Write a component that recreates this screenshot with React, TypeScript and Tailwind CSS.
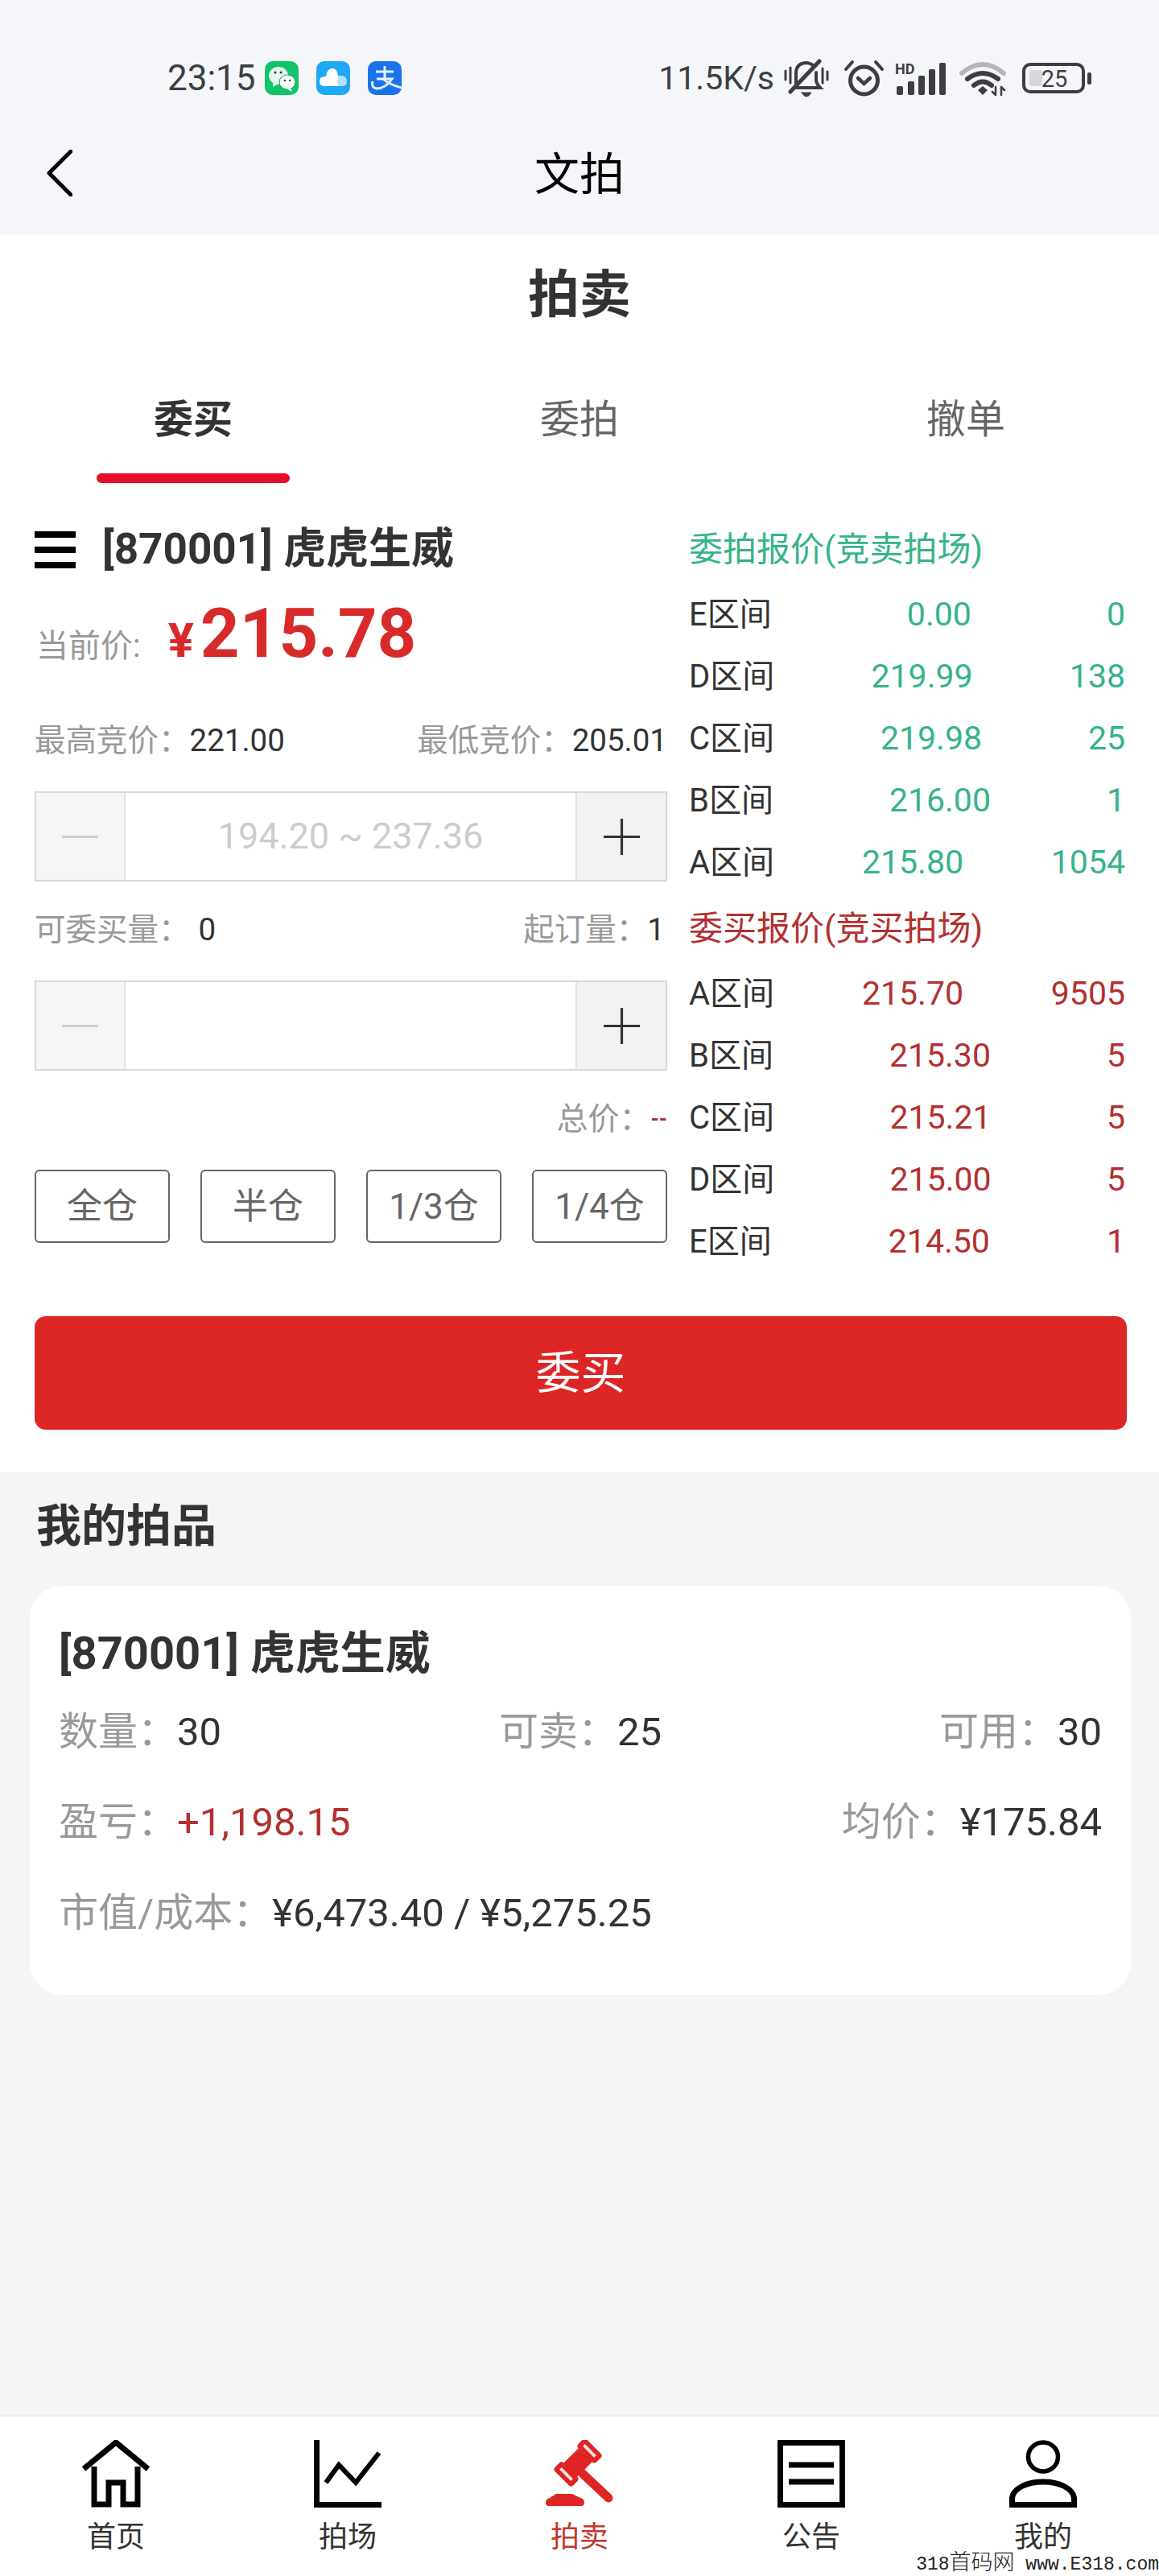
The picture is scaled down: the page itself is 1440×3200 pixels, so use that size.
import { Minus, Plus } from "lucide-react";

const sellRows = [
  { zone: "E区间", price: "0.00", qty: "0" },
  { zone: "D区间", price: "219.99", qty: "138" },
  { zone: "C区间", price: "219.98", qty: "25" },
  { zone: "B区间", price: "216.00", qty: "1" },
  { zone: "A区间", price: "215.80", qty: "1054" },
];

const buyRows = [
  { zone: "A区间", price: "215.70", qty: "9505" },
  { zone: "B区间", price: "215.30", qty: "5" },
  { zone: "C区间", price: "215.21", qty: "5" },
  { zone: "D区间", price: "215.00", qty: "5" },
  { zone: "E区间", price: "214.50", qty: "1" },
];

function StatusIcons() {
  return (
    <div className="flex items-center">
      <span className="text-[41px] leading-[48px] text-[#3d3e42]">11.5K/s</span>
      {/* mute */}
      <svg className="ml-[12px]" width="56" height="48" viewBox="0 0 56 48" fill="none" stroke="#3d3e42" strokeWidth="4" strokeLinecap="round">
        <path d="M15 34V18Q15 6 27 5Q33 5 37 9" />
        <path d="M40 17V27Q41 32 45 36H13" />
        <path d="M8 41L44 3" strokeWidth="5" />
        <path d="M22 42H34Q31 47 28 47Q25 47 22 42Z" fill="#3d3e42" strokeWidth="1" />
        <path d="M2 15V26M8 11V30M48 12V30M54 16V26" strokeWidth="3" />
      </svg>
      {/* alarm */}
      <svg className="ml-[18px]" width="51" height="46" viewBox="0 0 51 46" fill="none" stroke="#3d3e42" strokeWidth="5" strokeLinecap="round">
        <circle cx="25.5" cy="26" r="17" />
        <path d="M18 23L25.5 30L33 23" strokeWidth="4.5" />
        <path d="M3 12L11 3M48 12L40 3" strokeWidth="4" />
      </svg>
      {/* signal */}
      <svg className="ml-[13px]" width="63" height="42" viewBox="0 0 63 42" fill="#3d3e42">
        <text x="0" y="16" fontSize="18" fontWeight="700" fontFamily="Roboto, sans-serif">HD</text>
        <rect x="2" y="31" width="8" height="11" rx="2" />
        <rect x="16" y="25" width="8" height="17" rx="2" />
        <rect x="29" y="18" width="8" height="24" rx="2" />
        <rect x="42" y="10" width="8" height="32" rx="2" />
        <rect x="55" y="2" width="8" height="40" rx="2" />
      </svg>
      {/* wifi */}
      <svg className="ml-[17px]" width="58" height="44" viewBox="0 0 58 44" fill="none" strokeLinecap="round">
        <path d="M3 16Q29 -6 55 16" stroke="#b5b5b5" strokeWidth="6" />
        <path d="M10 23Q29 9 48 23" stroke="#3d3e42" strokeWidth="6" />
        <path d="M18 31Q29 22 40 31" stroke="#3d3e42" strokeWidth="6" />
        <path d="M23 37L29 32L35 37L29 43Z" fill="#3d3e42" />
        <path d="M45 33V43M52 33V43M41 39L45 43M56 37L52 33" stroke="#3d3e42" strokeWidth="2.5" />
      </svg>
      {/* battery */}
      <svg className="ml-[20px]" width="86" height="38" viewBox="0 0 86 38">
        <rect x="2" y="2" width="74" height="34" rx="8" fill="none" stroke="#3d3e42" strokeWidth="4" />
        <rect x="9" y="9" width="16" height="20" rx="3" fill="#d8d8da" />
        <rect x="81" y="12" width="5" height="15" rx="2" fill="#3d3e42" />
        <text x="40" y="30" textAnchor="middle" fontSize="29" fill="#3d3e42" fontFamily="Roboto, sans-serif">25</text>
      </svg>
    </div>
  );
}

function AppIcons() {
  return (
    <div className="ml-[11px] flex gap-[22px]">
      <svg width="42" height="42" viewBox="0 0 42 42">
        <rect width="42" height="42" rx="10" fill="#12c468" />
        <ellipse cx="17" cy="18" rx="12" ry="11" fill="#e4f8ed" />
        <path d="M10 25L10 32L17 28Z" fill="#e4f8ed" />
        <ellipse cx="28" cy="26" rx="10" ry="9" fill="#fff" stroke="#12a45a" strokeWidth="1" />
        <path d="M32 33L34 38L28 35Z" fill="#fff" />
        <circle cx="13" cy="14" r="1.5" fill="#333" />
        <circle cx="20" cy="14" r="1.5" fill="#333" />
        <circle cx="25" cy="24" r="1.2" fill="#333" />
        <circle cx="31" cy="24" r="1.2" fill="#333" />
      </svg>
      <svg width="42" height="42" viewBox="0 0 42 42">
        <rect width="42" height="42" rx="10" fill="#1ea8f5" />
        <path d="M25 18H32Q38 19 38 25Q38 31 32 31H25Z" fill="#b9e0fb" />
        <path d="M20 9Q26 9 27 18V31H10Q4 31 4 25Q4 19 10 19H12Q13 9 20 9Z" fill="#fff" />
      </svg>
      <svg width="42" height="42" viewBox="0 0 42 42">
        <rect width="42" height="42" rx="10" fill="#1a73ea" />
        <path d="M6 25Q4 33 11 34Q22 34 30 22H11M21 6V22M10 13H32M19 22Q26 29 42 33" fill="none" stroke="#e8f2ff" strokeWidth="3" />
      </svg>
    </div>
  );
}

function Stepper({ placeholder }: { placeholder?: string }) {
  return (
    <div className="flex h-[112px] border-2 border-[#d8d8d8]">
      <div className="flex w-[109px] items-center justify-center bg-[#f5f6f7]">
        <Minus className="h-[77px] w-[77px] text-[#cccccc]" strokeWidth={1} strokeLinecap="butt" />
      </div>
      <div className="flex flex-1 items-center justify-center border-x-2 border-[#e2e2e2] bg-white text-[45px] text-[#cccccc]">
        {placeholder}
      </div>
      <div className="flex w-[110px] items-center justify-center bg-[#f1f2f3]">
        <Plus className="h-[77px] w-[77px] text-[#333333]" strokeWidth={1} strokeLinecap="butt" />
      </div>
    </div>
  );
}

function Quote({ title, rows, color }: { title: string; rows: typeof sellRows; color: string }) {
  return (
    <div>
      <div className={`h-[66px] text-[42px] leading-[66px] ${color}`}>{title}</div>
      <div className="mt-[9px]">
        {rows.map((r) => (
          <div key={r.zone} className="flex h-[77px] items-center justify-between text-[41px]">
            <span className="text-[40px] text-[#333333]">{r.zone}</span>
            <span className={color}>{r.price}</span>
            <span className={color}>{r.qty}</span>
          </div>
        ))}
      </div>
    </div>
  );
}

function HomeIcon() {
  return (
    <svg width="84" height="84" viewBox="0 0 84 84" fill="none" stroke="#000" strokeWidth="7">
      <path d="M15 33V80H33V53H51V80H69V33" />
      <path d="M2 36L42 3L82 36" />
    </svg>
  );
}

function ChartIcon() {
  return (
    <svg width="84" height="84" viewBox="0 0 84 84" fill="none" stroke="#000">
      <path d="M3.5 0V80.5H84" strokeWidth="7" />
      <path d="M15 53L31 31L52 53L81 16" strokeWidth="6" />
    </svg>
  );
}

function GavelIcon() {
  return (
    <svg width="84" height="84" viewBox="0 0 84 84" fill="#df2424">
      <path d="M46 42L78 72" stroke="#df2424" strokeWidth="11" strokeLinecap="round" />
      <g transform="translate(40 28) rotate(-45)">
        <rect x="-28" y="-16" width="15" height="32" rx="4" />
        <rect x="13" y="-16" width="15" height="32" rx="4" />
        <rect x="-15" y="-12" width="30" height="24" />
        <rect x="-22.5" y="-10" width="4" height="20" fill="#ffffff" fillOpacity="0.85" />
        <rect x="18.5" y="-10" width="4" height="20" fill="#ffffff" fillOpacity="0.85" />
      </g>
      <path d="M0 78Q0 73 5 72L13 67H33L43 72Q48 73 48 78Q48 82 44 82H4Q0 82 0 78Z" />
    </svg>
  );
}

function NoticeIcon() {
  return (
    <svg width="84" height="84" viewBox="0 0 84 84" fill="none" stroke="#000" strokeWidth="7">
      <rect x="3.5" y="3.5" width="77" height="77" />
      <path d="M14 31H70M14 52H70" />
    </svg>
  );
}

function UserIcon() {
  return (
    <svg width="84" height="84" viewBox="0 0 84 84" fill="none" stroke="#000">
      <ellipse cx="42" cy="21" rx="18.5" ry="18" strokeWidth="5.5" />
      <path d="M3.5 80.5V72C5 60 22 52 42 52C62 52 79 60 80.5 72V80.5Z" strokeWidth="7" />
    </svg>
  );
}

const navItems = [
  { label: "首页", icon: <HomeIcon /> },
  { label: "拍场", icon: <ChartIcon /> },
  { label: "拍卖", icon: <GavelIcon />, active: true },
  { label: "公告", icon: <NoticeIcon /> },
  { label: "我的", icon: <UserIcon /> },
];

export default function App() {
  return (
    <div className="relative flex h-[3200px] w-[1440px] flex-col bg-[#f5f5f5] font-['Roboto','Noto_Sans_CJK_SC',sans-serif] text-[#333333]">
      {/* status bar + title */}
      <div className="h-[291px] bg-[#f4f6fa] pt-[73px]">
        <div className="flex h-[48px] items-center justify-between pl-[208px] pr-[84px]">
          <div className="flex items-center">
            <span className="text-[44px] leading-[48px] text-[#3d3e42]">23:15</span>
            <AppIcons />
          </div>
          <StatusIcons />
        </div>
        <div className="mt-[66px] grid h-[60px] grid-cols-[1fr_auto_1fr] items-center px-[58px]">
          <svg className="-mt-[4px]" width="32" height="58" viewBox="0 0 32 58" fill="none" stroke="#000" strokeWidth="5" strokeLinecap="round" strokeLinejoin="round">
            <path d="M30 2L3 29L30 56" />
          </svg>
          <span className="text-[56px] leading-[60px] text-black">文拍</span>
        </div>
      </div>

      {/* trade panel */}
      <div className="bg-white pb-[53px]">
        <h1 className="mt-[31px] h-[90px] text-center text-[64px] font-bold leading-[90px]">拍卖</h1>

        <div className="mt-[70px] grid grid-cols-3">
          <div className="flex flex-col items-center">
            <span className="h-[80px] text-[49px] font-bold leading-[80px]">委买</span>
            <span className="mt-[26px] h-[12px] w-[240px] rounded-full bg-[#e60f27]" />
          </div>
          <span className="h-[80px] text-center text-[49px] leading-[80px] text-[#666666]">委拍</span>
          <span className="h-[80px] text-center text-[49px] leading-[80px] text-[#666666]">撤单</span>
        </div>

        <div className="mt-[50px] grid grid-cols-[786px_542px] gap-[27px] pl-[43px]">
          <div>
            <div className="flex h-[66px] items-center">
              <div className="flex h-[46px] w-[51px] flex-col justify-between">
                <span className="h-[8px] bg-black" />
                <span className="h-[8px] bg-black" />
                <span className="h-[8px] bg-black" />
              </div>
              <span className="ml-[33px] text-[53px] font-bold">[870001] 虎虎生威</span>
            </div>

            <div className="mt-[31px] flex h-[80px] items-baseline pl-[2px]">
              <span className="text-[40px] text-[#999999]">当前价:</span>
              <span className="ml-[34px] text-[60px] font-bold leading-[60px] text-[#d92a2a]">¥</span>
              <span className="ml-[8px] text-[85px] font-bold leading-[80px] text-[#d92a2a]">215.78</span>
            </div>

            <div className="mt-[68px] flex h-[50px] items-center justify-between text-[38.5px]">
              <div>
                <span className="text-[#999999]">最高竞价：</span>
                <span>221.00</span>
              </div>
              <div>
                <span className="text-[#999999]">最低竞价：</span>
                <span>205.01</span>
              </div>
            </div>

            <div className="mt-[38px]">
              <Stepper placeholder="194.20 ~ 237.36" />
            </div>

            <div className="mt-[35px] flex h-[50px] items-center justify-between pr-[3px] text-[38.5px]">
              <div>
                <span className="text-[#999999]">可委买量：</span>
                <span className="ml-[11px]">0</span>
              </div>
              <div>
                <span className="text-[#999999]">起订量：</span>
                <span>1</span>
              </div>
            </div>

            <div className="mt-[38px]">
              <Stepper />
            </div>

            <div className="mt-[35px] flex h-[50px] items-center justify-end text-[39px]">
              <span className="text-[#999999]">总价：</span>
              <span className="text-[26px] font-bold text-[#a83232]">--</span>
            </div>

            <div className="mt-[38px] flex justify-between">
              {["全仓", "半仓", "1/3仓", "1/4仓"].map((t) => (
                <button
                  key={t}
                  className="h-[91px] w-[168px] rounded-[6px] border-2 border-[#666666] text-[44px] text-[#666666]"
                >
                  {t}
                </button>
              ))}
            </div>
          </div>

          <div>
            <Quote title="委拍报价(竞卖拍场)" rows={sellRows} color="text-[#36b38a]" />
            <div className="mt-[11px]">
              <Quote title="委买报价(竞买拍场)" rows={buyRows} color="text-[#b3302f]" />
            </div>
          </div>
        </div>

        <button className="mx-[43px] mt-[54px] block h-[141px] w-[1357px] rounded-[14px] bg-[#dc2626] text-[56px] text-white">
          委买
        </button>
      </div>

      {/* holdings */}
      <div className="pl-[45px] pt-[32px] text-[56px] font-bold leading-[70px]">我的拍品</div>
      <div className="ml-[37px] mr-[35px] mt-[39px] rounded-[40px] bg-white pb-[66px] pl-[36px] pr-[36px] pt-[51px]">
        <div className="h-[66px] text-[56px] font-bold leading-[66px]">[870001] 虎虎生威</div>
        <div className="mt-[28px] grid h-[70px] grid-cols-3 items-center text-[49px]">
          <div>
            <span className="text-[#999999]">数量：</span>30
          </div>
          <div className="text-center">
            <span className="text-[#999999]">可卖：</span>25
          </div>
          <div className="text-right">
            <span className="text-[#999999]">可用：</span>30
          </div>
        </div>
        <div className="mt-[44px] flex h-[70px] items-center justify-between text-[49px]">
          <div>
            <span className="text-[#999999]">盈亏：</span>
            <span className="text-[#b3302f]">+1,198.15</span>
          </div>
          <div>
            <span className="text-[#999999]">均价：</span>¥175.84
          </div>
        </div>
        <div className="mt-[43px] flex h-[70px] items-center text-[49px]">
          <span className="text-[#999999]">市值/成本：</span>¥6,473.40 / ¥5,275.25
        </div>
      </div>

      {/* bottom nav */}
      <div className="mt-auto grid h-[200px] grid-cols-5 border-t-2 border-[#eeeeee] bg-white pt-[29px]">
        {navItems.map((item) => (
          <div key={item.label} className="flex flex-col items-center">
            {item.icon}
            <span className={`mt-[17px] text-[36px] leading-[40px] ${item.active ? "text-[#c0392f]" : "text-[#333333]"}`}>
              {item.label}
            </span>
          </div>
        ))}
      </div>

      <div className="absolute bottom-[1px] right-0 flex items-baseline font-['Liberation_Mono','Noto_Sans_CJK_SC',monospace] text-[23px] leading-none text-[#222222]">
        318<span className="text-[27px] font-light leading-none">首码网</span>&nbsp;www.E318.com
      </div>
    </div>
  );
}
